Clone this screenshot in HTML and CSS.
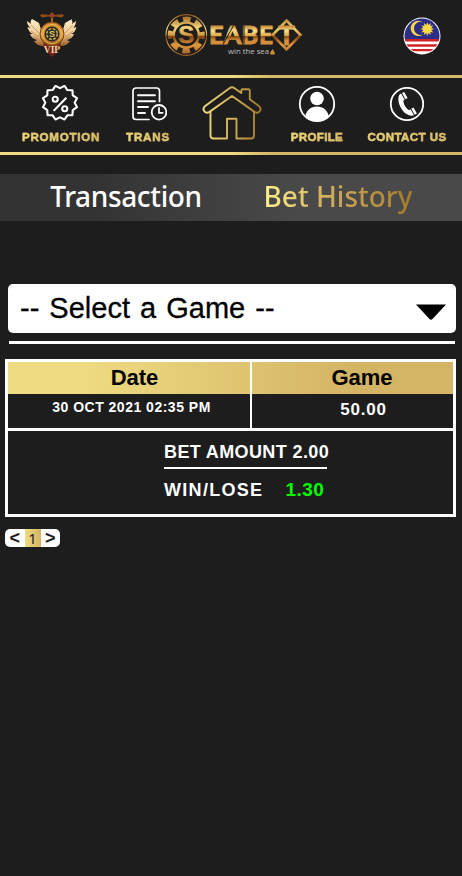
FILE: index.html
```html
<!DOCTYPE html>
<html lang="en">
<head>
<meta charset="utf-8">
<title>Seabet - Bet History</title>
<link rel="stylesheet" href="styles.css">
</head>
<body>
<header class="top">
  <svg class="vip" viewBox="0 0 54 48" width="54" height="48">
    <defs>
      <linearGradient id="wing" x1="0" y1="0" x2="0" y2="1"><stop offset="0" stop-color="#fff0cc"/><stop offset=".55" stop-color="#edc995"/><stop offset="1" stop-color="#9a5b22"/></linearGradient>
      <linearGradient id="ring" x1="0" y1="0" x2="0" y2="1"><stop offset="0" stop-color="#c77b24"/><stop offset=".5" stop-color="#e5a443"/><stop offset="1" stop-color="#8a4a12"/></linearGradient>
    </defs>
    <path d="M15 4.500l2-1.500 7 1 3-3 3 3 7-1 2 1.500-2 2-7-1-3 1.500-3-1.500-7 1z" fill="#8b4c18"/>
    <circle cx="27" cy="4.500" r="1.500" fill="#b52a3c"/>
    <path d="M26 7h2v6h-2z" fill="#a8641f"/>
    <path d="M7 8l7 4 3 10 2 13c-5 0-8-2-10-5 1 0 2 0 3-1-4-1-6-3-7-6h3c-3-1-5-4-5.500-7l3 1C3 15 2 12 2 10l4 3C5 11 6 9 7 8z" fill="url(#wing)"/>
    <path d="M47 8l-7 4-3 10-2 13c5 0 8-2 10-5-1 0-2 0-3-1 4-1 6-3 7-6h-3c3-1 5-4 5.500-7l-3 1c1.500-2 2.500-5 2.500-7l-4 3c1-2 0-4-1-5z" fill="url(#wing)"/>
    <path d="M6 14l8 8M6 20l8 6M8 25l7 5M48 14l-8 8M48 20l-8 6M46 25l-7 5" stroke="#b98450" stroke-width=".7"/>
    <path d="M18 35l3-3h12l3 3-5 7-4 4-4-4z" fill="#761e22"/>
    <circle cx="27" cy="23" r="12" fill="url(#ring)" stroke="#7d4312"/>
    <circle cx="27" cy="23" r="9.600" fill="none" stroke="#f1bd62" stroke-width=".9"/>
    <circle cx="27" cy="23" r="7.600" fill="#292b22"/>
    <circle cx="27" cy="23" r="5.300" fill="none" stroke="#c6a84f" stroke-width="1.600" stroke-dasharray="2.800 1.360"/>
    <text x="27" y="26" text-anchor="middle" class="vip-s">S</text>
    <text x="27" y="42" text-anchor="middle" class="vip-text">VIP</text>
  </svg>
  <svg class="logo" viewBox="0 0 140 46" width="140" height="46">
    <defs>
      <linearGradient id="gold" gradientUnits="userSpaceOnUse" x1="0" y1="2" x2="0" y2="42"><stop offset="0" stop-color="#9a601f"/><stop offset=".32" stop-color="#f3d477"/><stop offset=".5" stop-color="#d69b42"/><stop offset=".54" stop-color="#80430d"/><stop offset=".75" stop-color="#e09a3f"/><stop offset="1" stop-color="#9b5e21"/></linearGradient>
      <linearGradient id="letters" gradientUnits="userSpaceOnUse" x1="0" y1="13" x2="0" y2="32"><stop offset="0" stop-color="#c78c3b"/><stop offset=".25" stop-color="#fbe189"/><stop offset=".5" stop-color="#e0aa4c"/><stop offset=".56" stop-color="#8b4d13"/><stop offset=".75" stop-color="#d48f3b"/><stop offset="1" stop-color="#d48f3b"/></linearGradient>
    </defs>
    <circle cx="22.300" cy="22" r="20.300" fill="none" stroke="url(#gold)" stroke-width="1.200"/>
    <circle cx="22.300" cy="22" r="15.500" fill="none" stroke="url(#gold)" stroke-width="6" stroke-dasharray="7.400 4.774" stroke-dashoffset="3.700"/>
    <circle cx="22.300" cy="22" r="12.500" fill="#1d1d1d" stroke="url(#gold)" stroke-width="2.400"/>
    <text x="22.300" y="30.300" text-anchor="middle" class="chip-s">S</text>
    <text x="45" y="31" textLength="64" lengthAdjust="spacingAndGlyphs" class="letters">EABE</text>
    <path d="M59 31.500L69.500 12.500M80 12.500v19M96 12.500v19" stroke="#1d1d1d" stroke-width="1"/>
    <path d="M122.500 7.500l14 14.500-14 14.500-14-14.500z" fill="#1d1d1d" stroke="url(#gold)" stroke-width="2.600"/>
    <text x="122.500" y="31.500" text-anchor="middle" class="diamond-t">T</text>
    <text x="64" y="41" textLength="41" lengthAdjust="spacingAndGlyphs" class="tagline">win the sea</text>
    <path d="M106.300 39.500l2.200-3.500 2.200 3.500v2h-4.400z" fill="#d28c32"/>
  </svg>
  <svg class="flag" viewBox="0 0 38 38" width="38" height="38">
    <defs><clipPath id="disc"><circle cx="19" cy="19" r="17.500"/></clipPath></defs>
    <circle cx="19" cy="19" r="18.500" fill="#fff"/>
    <g clip-path="url(#disc)">
      <path d="M0 0h38v22H0z" fill="#2b2d86"/>
      <path d="M0 22h38v2.500H0zM0 27.300h38v2.500H0zM0 32h38v2.300H0z" fill="#d32128"/>
    </g>
    <path d="M20 5.200A7.700 7.700 0 1 0 20 17.500 6.600 6.600 0 1 1 20 5.200z" fill="#f8d845"/>
    <path d="M24.300 5l1 3 2.500-2-.6 3.100 3.100-.6-2 2.500 3 1-3 1 2 2.500-3.100-.6.6 3.100-2.500-2-1 3-1-3-2.500 2 .6-3.100-3.100.6 2-2.500-3-1 3-1-2-2.500 3.100.6-.6-3.100 2.500 2z" fill="#f8d845"/>
  </svg>
</header>
<nav class="nav">
  <a class="nav-item">
    <svg class="icon promo" viewBox="1 .5 36 36" width="38" height="38" fill="none" stroke="#fff" stroke-width="2" stroke-linejoin="round">
      <path d="M19 3.500l4.300-2.200 2.700 4 4.800.2.300 4.800 4 2.700-2.200 4.200 2.200 4.300-4 2.700-.3 4.800-4.800.2-2.700 4-4.300-2-4.300 2-2.700-4-4.800-.2-.3-4.800-4-2.700 2.200-4.300L2.900 13l4-2.700.3-4.800 4.800-.2 2.700-4z"/>
      <path d="M13 25L25 12.500"/><circle cx="14.500" cy="14" r="2.400"/><circle cx="23.500" cy="23" r="2.400"/>
    </svg>
    <span class="label">PROMOTION</span>
  </a>
  <a class="nav-item">
    <svg class="icon" viewBox="0 0 38 38" width="38" height="38" fill="none" stroke="#fff" stroke-width="1.700" stroke-linecap="round">
      <path d="M20 34.500H7a3 3 0 0 1-3-3V6a3 3 0 0 1 3-3h20.500a3 3 0 0 1 3 3v10.500"/>
      <path d="M9 10.200h17M9 16.300h17M9 22h10M9 28h7" stroke-width="1.900"/>
      <circle cx="30" cy="27.300" r="7.300" stroke-width="1.800"/><path d="M30 22.800v5h3.700"/>
    </svg>
    <span class="label trans">TRANS</span>
  </a>
  <a class="nav-item home">
    <svg viewBox="0 0 60 54" width="60" height="54" fill="none" stroke="url(#homegold)" stroke-width="1.900" stroke-linejoin="round">
      <defs><linearGradient id="homegold" gradientUnits="userSpaceOnUse" x1="0" y1="0" x2="60" y2="0"><stop offset="0" stop-color="#f3df80"/><stop offset=".55" stop-color="#ceaa55"/><stop offset="1" stop-color="#9c762b"/></linearGradient></defs>
      <path d="M27.500 2.200q2.500-1.800 5 0L39.300 7V4.800q0-1.500 1.500-1.500h5.500q1.500 0 1.500 1.500v8.500l9 6.700q2.700 2.200 1.200 4.700-1.800 3.300-5.500 1.200L30 10 7.500 25.900q-3.700 2.100-5.500-1.200-1.500-2.500 1.200-4.700z"/>
      <path d="M8.500 26v23.500q0 3 3 3H25V32.800h9.500v19.700H49q3 0 3-3V26"/>
    </svg>
  </a>
  <a class="nav-item">
    <svg class="icon" viewBox="0 0 38 38" width="38" height="38">
      <circle cx="19" cy="19" r="17.200" fill="none" stroke="#fff" stroke-width="1.800"/>
      <circle cx="19" cy="13.500" r="6.800" fill="#fff"/>
      <path d="M7.300 31.500C8 25.500 13 21.500 19 21.500s11 4 11.700 10A17 17 0 0 1 19 36a17 17 0 0 1-11.700-4.500z" fill="#fff"/>
    </svg>
    <span class="label profile">PROFILE</span>
  </a>
  <a class="nav-item">
    <svg class="icon" viewBox="0 0 38 38" width="38" height="38">
      <circle cx="19" cy="19" r="16.200" fill="none" stroke="#fff" stroke-width="1.800"/>
      <path d="M11.800 9.200l1.300-.7 3.500 6.200-1.400 1c.6 4.300 2.800 7.700 5.800 9.500l1.500-.9 3.500 6c-5 1.500-10-1.800-13-7.200-2.700-5-3.700-10.700-1.200-13.900z" fill="#fff"/>
      <path d="M14 8.100l2.200-1.200 3.400 6-2.200 1.300zM23.300 23.800l2.200-1.300 3.400 6-2.200 1.300z" fill="#fff"/>
    </svg>
    <span class="label contact">CONTACT US</span>
  </a>
</nav>
<div class="tabs">
  <a class="tab"><span class="tab-name">Transaction</span></a>
  <a class="tab"><span class="tab-name active">Bet History</span></a>
</div>
<main class="content">
  <div class="select">
    <span>-- Select a Game --</span>
    <svg width="32" height="18" viewBox="0 0 32 18"><path d="M1 1.500h30L17.500 16q-1.500 1.500-3 0z"/></svg>
  </div>
  <div class="rule"></div>
  <section class="table">
    <div class="row head"><div class="cell">Date</div><div class="cell">Game</div></div>
    <div class="row data"><div class="cell date">30 OCT 2021 02:35 PM</div><div class="cell game">50.00</div></div>
    <div class="details">
      <div class="bet">BET AMOUNT 2.00</div>
      <div class="result"><span class="result-label">WIN/LOSE</span><span class="win">1.30</span></div>
    </div>
  </section>
  <div class="pager"><a class="arrow">&lt;</a><a class="page">1</a><a class="arrow">&gt;</a></div>
</main>
</body>
</html>
```
FILE: styles.css
```css
* { box-sizing: border-box; }
body {
  margin: 0;
  min-height: 876px;
  background: #1d1d1d;
  color: #fff;
  font-family: "Liberation Sans", Arial, sans-serif;
}
svg { display: block; flex: none; }

.top {
  display: flex;
  align-items: flex-start;
  height: 75px;
  padding: 11px 21px 0 25px;
}
.logo { margin: 2px 0 0 85px; }
.flag { margin: 6px 0 0 auto; }
.vip-s { font: bold 9px "Liberation Sans", sans-serif; fill: #e9c869; }
.vip-text { font: bold 9.5px "Liberation Serif", serif; fill: #ffeeb0; stroke: #633010; stroke-width: .2px; }
.chip-s { font: bold 24px "Liberation Sans", sans-serif; fill: url(#gold); stroke: url(#gold); stroke-width: .5px; }
.letters { font: 900 25px Lato, sans-serif; fill: url(#letters); stroke: url(#letters); stroke-width: .8px; }
.diamond-t { font: bold 27px "Liberation Sans", sans-serif; fill: url(#letters); stroke: url(#letters); stroke-width: .8px; }
.tagline { font: 7.5px "Open Sans", sans-serif; fill: #c0c0c0; }

.nav {
  display: grid;
  grid-template-columns: 88px 86px 82px 88px 92px;
  height: 80px;
  padding: 4px 0 0 17px;
  border: solid;
  border-width: 3px 0;
  border-image: linear-gradient(90deg, #efdc82 0 50%, #d5b566 59%) 3;
}
.nav-item { display: flex; flex-direction: column; align-items: center; }
.icon { margin-top: 3px; }
.icon.promo { margin-right: 3px; }
.nav-item.home { padding-top: 4px; }
.label {
  margin-top: 7px;
  font-size: 11.5px;
  line-height: 14px;
  font-weight: bold;
  letter-spacing: .8px;
  white-space: nowrap;
  background: linear-gradient(90deg, #efdc7c, #d7b768);
  background-clip: text;
  color: transparent;
  -webkit-text-stroke: .4px #dfc46f;
}
.trans { letter-spacing: .85px; }
.profile { letter-spacing: .35px; }
.contact { letter-spacing: .45px; }

.tabs {
  display: grid;
  grid-template-columns: 252px 172px;
  height: 47px;
  margin-top: 19px;
  background: linear-gradient(90deg, #333 20%, #494949 65%);
}
.tab { display: flex; justify-content: center; padding-top: 2px; }
.tab-name {
  font: 500 28px/40px "Noto Sans", sans-serif;
  letter-spacing: -.35px;
  white-space: nowrap;
}
.active {
  letter-spacing: 0;
  background: linear-gradient(90deg, #fff08e, #d4b15d 40%, #a37a2c);
  background-clip: text;
  color: transparent;
}

.content { padding: 63px 6px 0 5px; }
.select {
  display: flex;
  align-items: center;
  justify-content: space-between;
  height: 49px;
  margin-left: 3px;
  padding: 0 9px 0 12px;
  border-radius: 5px;
  background: #fff;
  color: #000;
  font-size: 29px;
  word-spacing: 2px;
  -webkit-text-stroke: .3px #000;
}
.select svg { margin-top: 7px; }
.rule { height: 3px; margin: 8px 1px 15px 4px; background: #fff; }

.table { height: 158px; border: 3px solid #fff; }
.row { display: grid; grid-template-columns: 242px 1fr; }
.cell { text-align: center; font-weight: bold; }
.cell + .cell { border-left: 2px solid #fff; }
.head {
  height: 32px;
  background: linear-gradient(90deg, #efdc82 15%, #d4b465 78%);
  color: #000;
  font-size: 22px;
  line-height: 31px;
}
.head .cell { padding-left: 11px; }
.head .cell + .cell { padding-left: 19px; }
.data { height: 37px; border-bottom: 3px solid #fff; }
.date { padding-left: 5px; font-size: 14px; line-height: 26px; letter-spacing: .5px; }
.game { padding-left: 22px; font-size: 17px; line-height: 31px; letter-spacing: .8px; }
.details { padding: 10px 0 0 156px; font-size: 18px; font-weight: bold; }
.bet {
  width: 163px;
  height: 28px;
  border-bottom: 2px solid #fff;
  line-height: 22px;
  letter-spacing: .38px;
  white-space: nowrap;
}
.result { display: flex; gap: 22px; height: 22px; margin-top: 10px; line-height: 22px; }
.result-label { letter-spacing: 1.3px; }
.win { color: #0f0; font-size: 19px; letter-spacing: .5px; }

.pager {
  display: flex;
  width: 55px;
  height: 18px;
  margin-top: 12px;
  border-radius: 5px;
  background: #fff;
  color: #1d1d1d;
  text-align: center;
}
.arrow { flex: 1; font: bold 18px/18px "Liberation Sans", sans-serif; }
.page { width: 16px; background: linear-gradient(90deg, #efdc82, #d4b465); font: 15px/18px "Noto Sans", sans-serif; }
```
